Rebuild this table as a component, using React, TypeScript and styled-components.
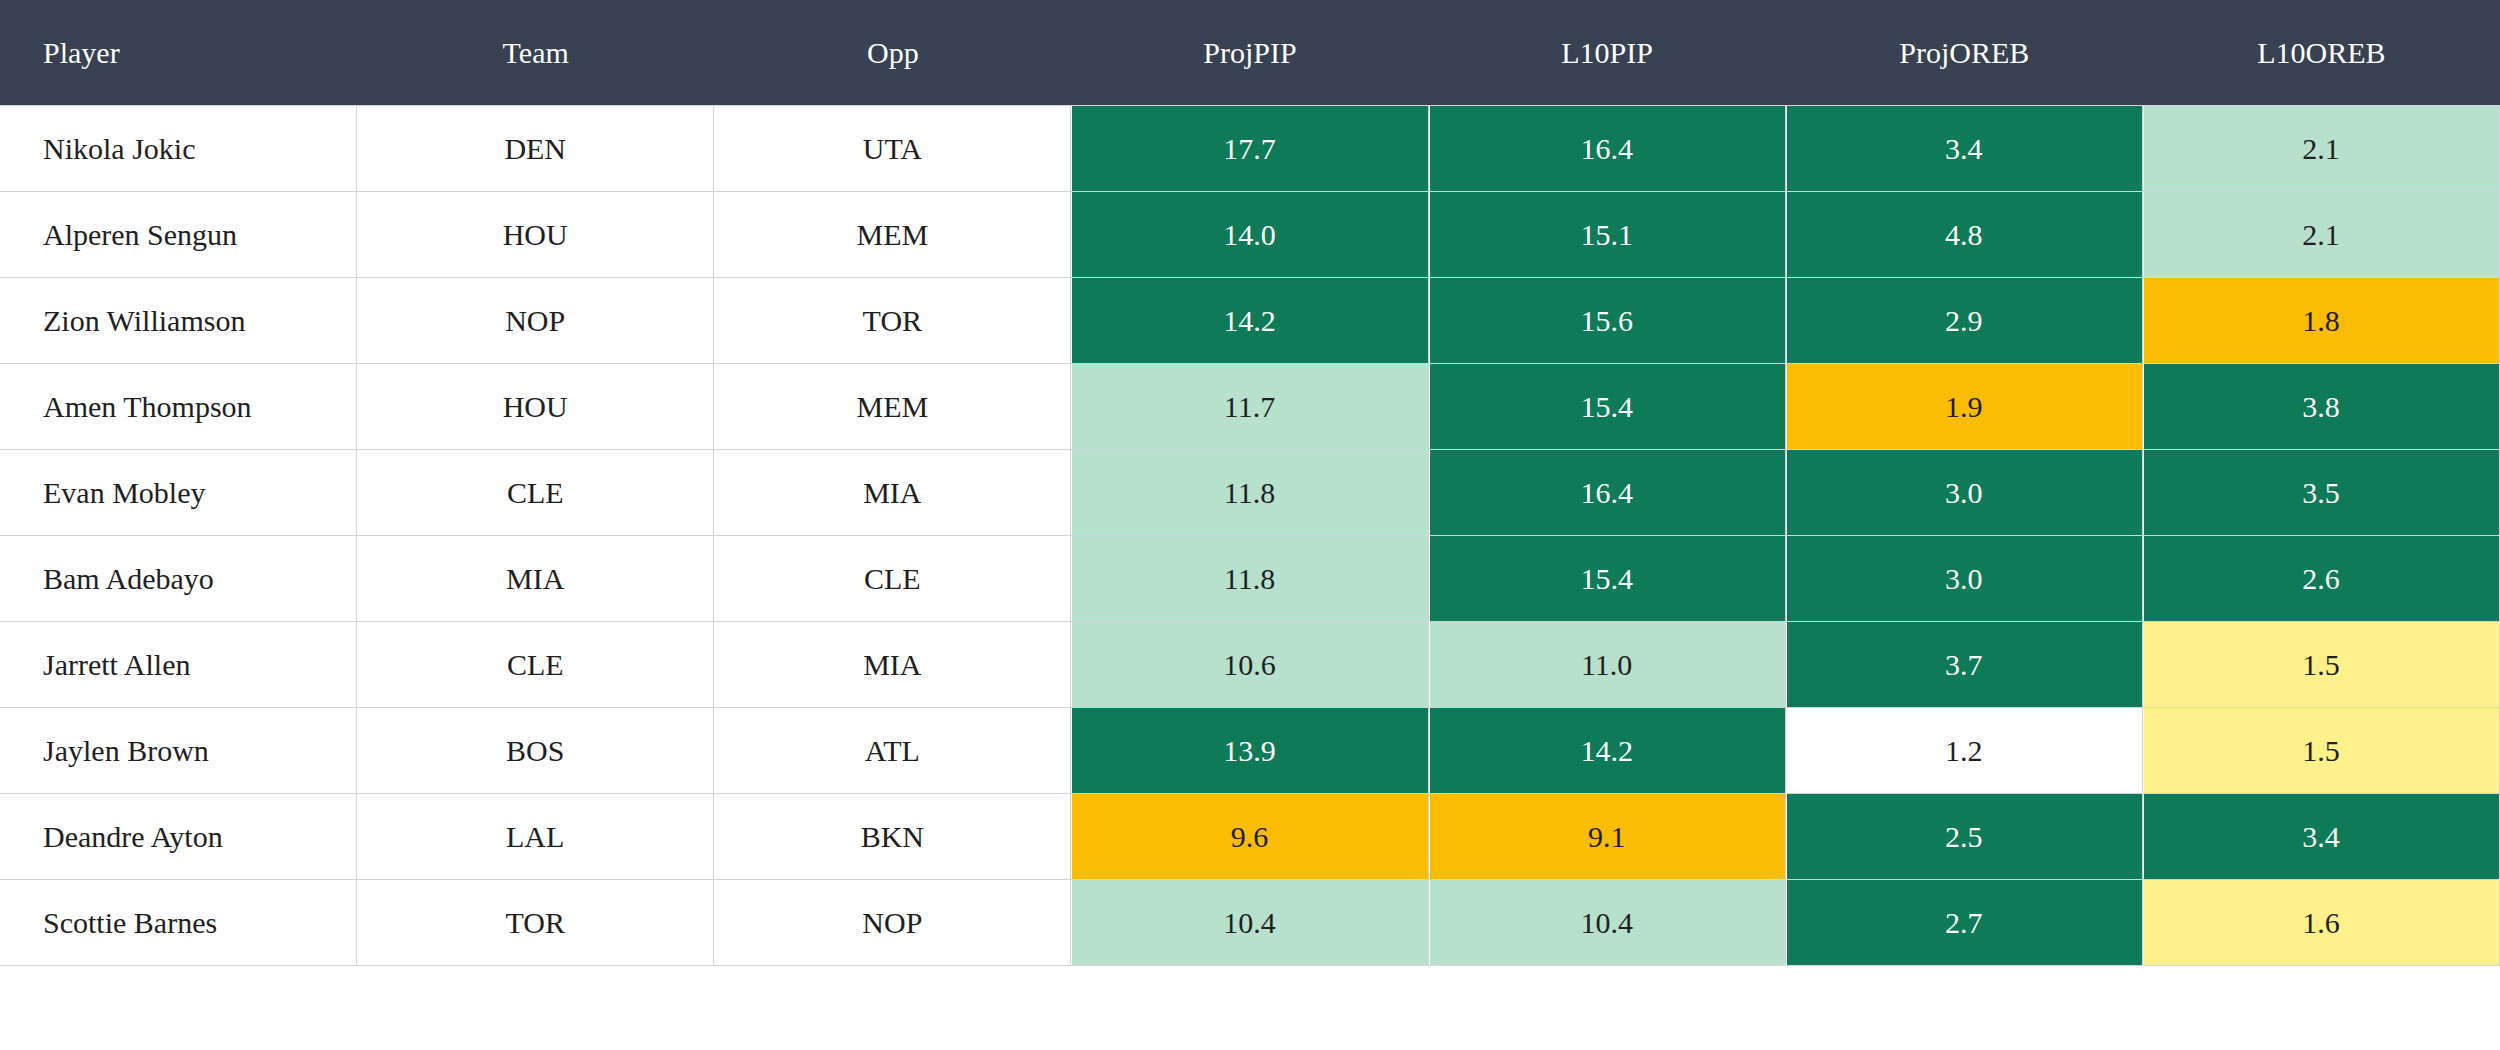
import styled, { createGlobalStyle } from 'styled-components';

type Tone = 'green' | 'mint' | 'amber' | 'lemon' | 'plain';

interface Player {
  name: string;
  team: string;
  opp: string;
  stats: [string, Tone][];
}

const players: Player[] = [
  { name: 'Nikola Jokic', team: 'DEN', opp: 'UTA', stats: [['17.7', 'green'], ['16.4', 'green'], ['3.4', 'green'], ['2.1', 'mint']] },
  { name: 'Alperen Sengun', team: 'HOU', opp: 'MEM', stats: [['14.0', 'green'], ['15.1', 'green'], ['4.8', 'green'], ['2.1', 'mint']] },
  { name: 'Zion Williamson', team: 'NOP', opp: 'TOR', stats: [['14.2', 'green'], ['15.6', 'green'], ['2.9', 'green'], ['1.8', 'amber']] },
  { name: 'Amen Thompson', team: 'HOU', opp: 'MEM', stats: [['11.7', 'mint'], ['15.4', 'green'], ['1.9', 'amber'], ['3.8', 'green']] },
  { name: 'Evan Mobley', team: 'CLE', opp: 'MIA', stats: [['11.8', 'mint'], ['16.4', 'green'], ['3.0', 'green'], ['3.5', 'green']] },
  { name: 'Bam Adebayo', team: 'MIA', opp: 'CLE', stats: [['11.8', 'mint'], ['15.4', 'green'], ['3.0', 'green'], ['2.6', 'green']] },
  { name: 'Jarrett Allen', team: 'CLE', opp: 'MIA', stats: [['10.6', 'mint'], ['11.0', 'mint'], ['3.7', 'green'], ['1.5', 'lemon']] },
  { name: 'Jaylen Brown', team: 'BOS', opp: 'ATL', stats: [['13.9', 'green'], ['14.2', 'green'], ['1.2', 'plain'], ['1.5', 'lemon']] },
  { name: 'Deandre Ayton', team: 'LAL', opp: 'BKN', stats: [['9.6', 'amber'], ['9.1', 'amber'], ['2.5', 'green'], ['3.4', 'green']] },
  { name: 'Scottie Barnes', team: 'TOR', opp: 'NOP', stats: [['10.4', 'mint'], ['10.4', 'mint'], ['2.7', 'green'], ['1.6', 'lemon']] },
];

const columns = ['Player', 'Team', 'Opp', 'ProjPIP', 'L10PIP', 'ProjOREB', 'L10OREB'];

const tones: Record<Tone, { bg: string; fg: string }> = {
  green: { bg: '#0e7a58', fg: '#ffffff' },
  mint: { bg: '#b7e1cd', fg: '#1f1f1f' },
  amber: { bg: '#fbbc04', fg: '#1f1f1f' },
  lemon: { bg: '#fef08a', fg: '#1f1f1f' },
  plain: { bg: '#ffffff', fg: '#1f1f1f' },
};

const App = () => {
  return (
    <>
      <GlobalStyle />
      <Table>
        <colgroup>
          {columns.map((c) => (
            <col key={c} style={{ width: `${100 / columns.length}%` }} />
          ))}
        </colgroup>
        <thead>
          <tr>
            {columns.map((c, i) => (
              <HeadCell key={c} $left={i === 0}>
                {c}
              </HeadCell>
            ))}
          </tr>
        </thead>
        <tbody>
          {players.map((p) => (
            <tr key={p.name}>
              <Cell $left>{p.name}</Cell>
              <Cell>{p.team}</Cell>
              <Cell>{p.opp}</Cell>
              {p.stats.map(([value, tone], i) => (
                <Cell key={i} $tone={tone}>
                  {value}
                </Cell>
              ))}
            </tr>
          ))}
        </tbody>
      </Table>
    </>
  );
};

export default App;

const GlobalStyle = createGlobalStyle`
  body {
    margin: 0;
    background: #ffffff;
    font-family: "Liberation Serif", "DejaVu Serif", serif;
  }
`;

const Table = styled.table`
  width: 100%;
  table-layout: fixed;
  border-collapse: separate;
  border-spacing: 0;
  font-size: 30px;
`;

const HeadCell = styled.th<{ $left?: boolean }>`
  height: 105px;
  padding: 0 ${(p) => (p.$left ? '43px' : '0')};
  background: #374151;
  color: #ffffff;
  font-weight: 400;
  text-align: ${(p) => (p.$left ? 'left' : 'center')};
  border-bottom: 1px solid #d1d5db;
`;

const Cell = styled.td<{ $left?: boolean; $tone?: Tone }>`
  height: 85px;
  padding: 0 ${(p) => (p.$left ? '43px' : '0')};
  text-align: ${(p) => (p.$left ? 'left' : 'center')};
  background: ${(p) => tones[p.$tone ?? 'plain'].bg};
  color: ${(p) => tones[p.$tone ?? 'plain'].fg};
  border: 1px solid #d1d5db;
  border-top: 0;
  border-left: 0;
  box-shadow: inset 1px 0 0 #ffffff;
`;
